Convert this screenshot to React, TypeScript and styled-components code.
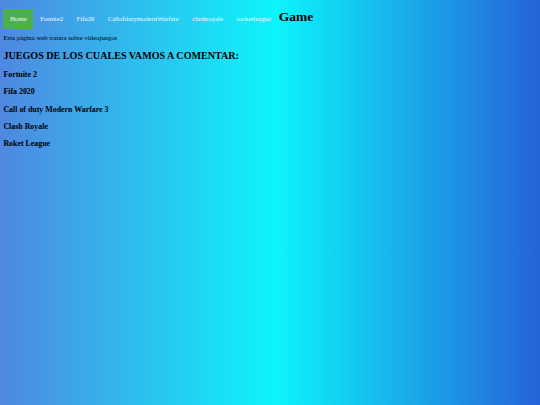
import styled, { createGlobalStyle } from "styled-components";

const GlobalStyle = createGlobalStyle`
  html, body {
    margin: 0;
    min-height: 100%;
  }
  body {
    min-height: 405px;
    padding: 3.4px;
    box-sizing: border-box;
    font-family: "Liberation Serif", "Times New Roman", serif;
    font-size: 6.75px;
    color: #000;
    background: linear-gradient(to right, #5087e1 0%, #0cf5fb 51%, #2563d9 100%);
    background-attachment: fixed;
  }
`;

const NavBar = styled.nav`
  display: flex;
  align-items: flex-start;
  margin-top: 5.9px;
`;

const NavList = styled.ul`
  display: flex;
  list-style: none;
  margin: 0;
  padding: 0;
`;

const NavLink = styled.a<{ $active?: boolean }>`
  display: block;
  padding: 5.9px 6.75px;
  color: #f4fbff;
  font-weight: normal;
  text-decoration: none;
  line-height: 7.8px;
  background: ${(p) => (p.$active ? "#4caf50" : "transparent")};
`;

const Brand = styled.h1`
  margin: 0 0 0 1px;
  font-size: 13.5px;
  line-height: 15.5px;
  font-weight: bold;
`;

const Intro = styled.p`
  margin: 5.25px 0 6.75px;
  line-height: 7.8px;
`;

const Title = styled.h2`
  margin: 7.9px 0 8.4px;
  font-size: 10.1px;
  line-height: 11.6px;
`;

const Game = styled.h3`
  margin: 8.3px 0;
  font-size: 7.9px;
  line-height: 9.1px;
`;

const links = [
  "Home",
  "Fornite2",
  "Fifa20",
  "CallofdutymodernWarfare",
  "clashroyale",
  "rocketleague",
];

const games = [
  "Fortnite 2",
  "Fifa 2020",
  "Call of duty Modern Warfare 3",
  "Clash Royale",
  "Roket League",
];

export default function App() {
  return (
    <>
      <GlobalStyle />
      <NavBar>
        <NavList>
          {links.map((l, i) => (
            <li key={l}>
              <NavLink href="#" $active={i === 0}>
                {l}
              </NavLink>
            </li>
          ))}
        </NavList>
        <Brand>Game</Brand>
      </NavBar>
      <Intro>Esta página web tratara sobre videojuegos</Intro>
      <Title>JUEGOS DE LOS CUALES VAMOS A COMENTAR:</Title>
      {games.map((g) => (
        <Game key={g}>{g}</Game>
      ))}
    </>
  );
}
